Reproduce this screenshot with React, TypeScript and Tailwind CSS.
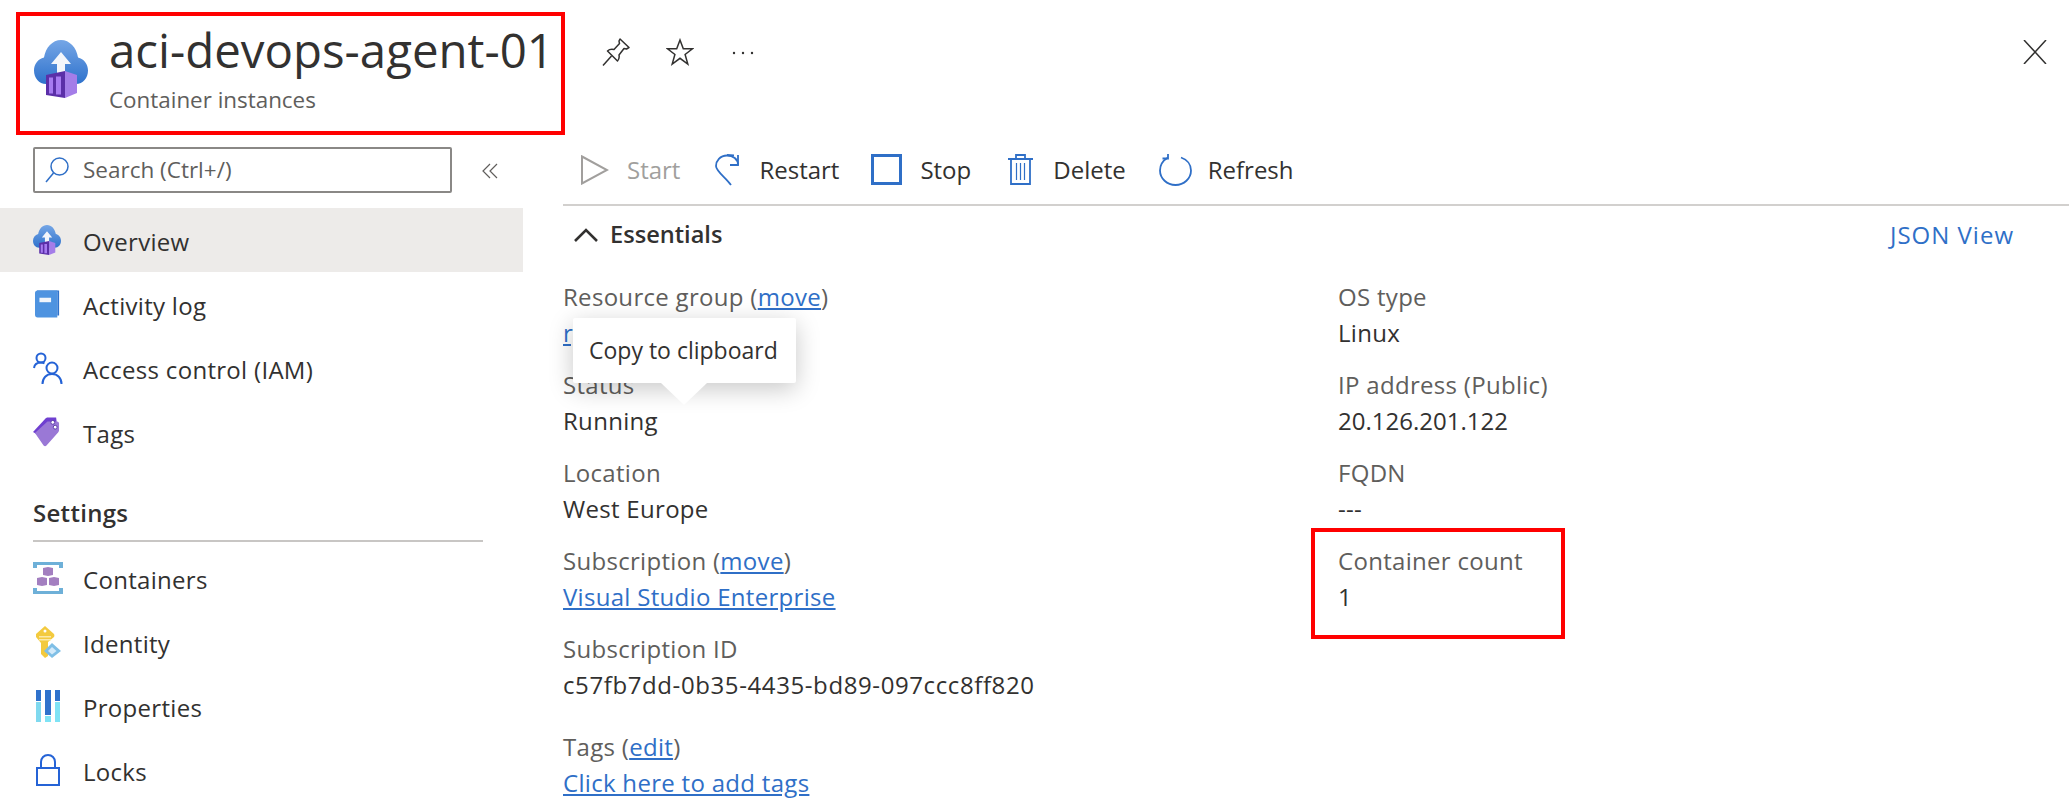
import type { ReactNode } from 'react';

const BLUE = '#2f6fc7';

function ContainerInstanceIcon({ className }: { className: string }) {
  return (
    <svg viewBox="0 0 54 58" className={className}>
      <defs>
        <linearGradient id="cloud" x1="0" y1="0" x2="0" y2="1">
          <stop offset="0" stopColor="#75a6e6" />
          <stop offset="1" stopColor="#2f72cc" />
        </linearGradient>
      </defs>
      <path
        d="M12 44C5 44 0 38 0 30.500C0 24 4 19 10 17.500C11.500 7.500 18.500 0 27 0C35.500 0 42.500 7.500 44 17.500C50 19 54 24 54 30.500C54 38 49 44 42 44Z"
        fill="url(#cloud)"
      />
      <path d="M27 12L37 24H31V36H23V24H17Z" fill="#f3f6fb" />
      <path d="M12 35L31 31V58L12 55Z" fill="#5b2fa8" />
      <path d="M15 37.500H19V53.500H15ZM22 36.500H27V54.500H22Z" fill="#a67af0" />
      <path d="M31 31L43 35V53L31 58Z" fill="#a47de8" />
    </svg>
  );
}

function PinIcon() {
  return (
    <svg viewBox="0 0 28 28" className="h-[28px] w-[28px]" fill="none" stroke="#323130" strokeWidth="1.500">
      <path d="M18 1L27 9.500L24.500 11L22 10.500L17 17C17.500 19.500 17 21.500 15.500 23L5.500 13C7 11.500 9.500 11 12 11.500L17.500 5.500L17 3Z" strokeLinejoin="round" />
      <path d="M9.500 18L1 27.500" />
    </svg>
  );
}

function StarIcon() {
  return (
    <svg viewBox="0 0 28 28" className="h-[28px] w-[28px]" fill="none" stroke="#323130" strokeWidth="1.500">
      <path d="M14 2L17.300 10.800H26.500L19.100 16.500L21.800 26L14 20.300L6.200 26L8.900 16.500L1.500 10.800H10.700Z" strokeLinejoin="miter" />
    </svg>
  );
}

function ToolButton({ icon, label, muted, gapClass }: { icon: ReactNode; label: string; muted?: boolean; gapClass: string }) {
  return (
    <div className={`flex items-center ${gapClass} ${muted ? 'text-[#a19f9d]' : 'text-[#323130]'}`}>
      {icon}
      <span>{label}</span>
    </div>
  );
}

function NavItem({ icon, label, active }: { icon: ReactNode; label: string; active?: boolean }) {
  return (
    <div className={`flex h-[64px] items-center text-[#323130] ${active ? 'bg-[#edebe9]' : ''}`}>
      <div className="flex w-[83px] shrink-0 justify-start pl-[33px]">{icon}</div>
      <span className="pt-[3px]">{label}</span>
    </div>
  );
}

function Field({ label, children, className = '' }: { label: ReactNode; children: ReactNode; className?: string }) {
  return (
    <div className={`mb-[16px] ${className}`}>
      <div className="flex h-[36px] items-center text-[#605e5c]">
        <span>{label}</span>
      </div>
      <div className="flex h-[36px] items-center text-[#323130]">{children}</div>
    </div>
  );
}

function Link({ children }: { children: ReactNode }) {
  return <span className="text-[#2f6fc7] underline underline-offset-2">{children}</span>;
}

const navTop = [
  { label: 'Overview', active: true, icon: <ContainerInstanceIcon className="h-[32px] w-[28px]" /> },
  {
    label: 'Activity log',
    icon: (
      <svg viewBox="0 0 28 30" className="ml-[2px] h-[30px] w-[25px]">
        <path d="M2 0H27V28H25V1H3Z" fill="#2f72cc" />
        <path d="M0 3C0 1 1 0 3 0H25V30H3C1 30 0 29 0 27Z" fill="#4e93e0" />
        <rect x="5" y="8" width="13" height="5" fill="#f1f5fb" />
      </svg>
    ),
  },
  {
    label: 'Access control (IAM)',
    icon: (
      <svg viewBox="0 0 30 32" className="h-[32px] w-[30px]" fill="none" stroke="#2563d6" strokeWidth="2">
        <circle cx="8" cy="6" r="4.500" />
        <circle cx="19" cy="16" r="5.500" />
        <path d="M1 16C1.500 12.500 4 10.500 8 10.500C9.500 10.500 10.500 10.800 11.500 11.300" />
        <path d="M9.500 32C9.500 26 13.500 22 19 22C24.500 22 28.500 26 28.500 32" />
      </svg>
    ),
  },
  {
    label: 'Tags',
    icon: (
      <svg viewBox="0 0 28 30" className="h-[30px] w-[27px]">
        <path d="M0 15L13 1C14 0 15 0 16 0L24 0L25 9L12 22Z" fill="#6f3fd0" />
        <path d="M2 16L15 4L25 4C26 4 27 5 27 6V13C27 14 26.500 15 26 15.500L14 29C13 30 12 30 11 29Z" fill="#9a78d6" />
        <circle cx="20.500" cy="5" r="2" fill="#fff" stroke="#5b3aa8" />
        <circle cx="23" cy="10" r="2" fill="#fff" stroke="#5b3aa8" />
      </svg>
    ),
  },
];

const navSettings = [
  {
    label: 'Containers',
    icon: (
      <svg viewBox="0 0 30 32" className="h-[32px] w-[30px]">
        <path d="M0 0H30V6H26V3H4V6H0ZM0 32V26H4V29H26V26H30V32Z" fill="#6eb0d8" />
        <path d="M10 6L15 5V14L10 13ZM15 5L20 6V13L15 14ZM4 16L9 15V24L4 23ZM9 15L14 16V23L9 24ZM16 16L21 15V24L16 23ZM21 15L26 16V23L21 24Z" fill="#a37fc0" />
      </svg>
    ),
  },
  {
    label: 'Identity',
    icon: (
      <svg viewBox="0 0 26 32" className="ml-[3px] h-[32px] w-[26px]">
        <path d="M9 0L18 8C18.500 9 18.500 10 18 11L12 16V30L9 32L5 28V17L0 11C-0.500 10 -0.500 9 0 8Z" fill="#f3ca3e" />
        <rect x="3" y="10" width="12" height="1.500" fill="#fbe9a8" />
        <rect x="3" y="13" width="12" height="1.500" fill="#fbe9a8" />
        <circle cx="9" cy="5" r="1.500" fill="#fff" />
        <path d="M16 17L25 25L16 32L8 25Z" fill="#7fbfe6" />
        <path d="M16 21L20.500 25L16 28.500L12 25Z" fill="#d3eafa" />
      </svg>
    ),
  },
  {
    label: 'Properties',
    icon: (
      <svg viewBox="0 0 24 32" className="ml-[3px] h-[32px] w-[24px]">
        <rect x="0" y="0" width="5" height="11" fill="#2f72cc" />
        <rect x="0" y="12" width="5" height="20" fill="#7fd9ef" />
        <rect x="9" y="0" width="6" height="25" fill="#2f72cc" />
        <rect x="9" y="26" width="6" height="6" fill="#7fe3f5" />
        <rect x="19" y="0" width="5" height="11" fill="#2f72cc" />
        <rect x="19" y="12" width="5" height="20" fill="#7fe3f5" />
      </svg>
    ),
  },
  {
    label: 'Locks',
    icon: (
      <svg viewBox="0 0 24 32" className="ml-[3px] h-[32px] w-[24px]" fill="none" stroke="#2563d6" strokeWidth="2">
        <rect x="1" y="14" width="22" height="17" />
        <path d="M5 14V8C5 4 8 1 12 1C16 1 19 4 19 8V14" />
      </svg>
    ),
  },
];

export default function App() {
  return (
    <div className="relative flex h-[806px] w-[2069px] flex-col overflow-hidden bg-white font-['Open_Sans',sans-serif] text-[24px] tracking-[0.3px]">
      {/* header */}
      <header className="flex h-[140px] shrink-0 items-start tracking-normal">
        <div className="ml-[34px] mt-[40px] w-[75px] shrink-0">
          <ContainerInstanceIcon className="h-[58px] w-[54px]" />
        </div>
        <div className="mt-[16px] w-[493px] shrink-0">
          <h1 className="text-[47.400px] leading-[68px] font-medium text-[#323130]">aci-devops-agent-01</h1>
          <div className="mt-[2px] text-[22.400px] leading-[28px] text-[#605e5c]">Container instances</div>
        </div>
        <div className="mt-[38px] flex items-center gap-[36px]">
          <PinIcon />
          <StarIcon />
          <svg viewBox="0 0 22 4" className="ml-[2px] mt-[2px] h-[4px] w-[22px]" fill="#323130">
            <circle cx="2" cy="2" r="1.200" />
            <circle cx="11" cy="2" r="1.200" />
            <circle cx="20" cy="2" r="1.200" />
          </svg>
        </div>
        <svg viewBox="0 0 24 24" className="ml-auto mr-[22px] mt-[40px] h-[24px] w-[24px]" stroke="#323130" strokeWidth="1.500">
          <path d="M1 0L23 24M23 0L1 24" />
        </svg>
      </header>

      <div className="flex min-h-0 flex-1">
        {/* sidebar */}
        <aside className="w-[523px] shrink-0">
          <div className="flex h-[68px] items-start pl-[33px] pt-[7px]">
            <div className="flex h-[46px] w-[419px] items-center rounded-[2px] border-2 border-[#8a8886] pl-[10px] text-[22.500px] tracking-normal text-[#605e5c]">
              <svg viewBox="0 0 24 26" className="mr-[14px] h-[26px] w-[24px]" fill="none" stroke={BLUE} strokeWidth="1.500">
                <circle cx="14.500" cy="9.500" r="8.500" />
                <path d="M8.500 16L1 25" />
              </svg>
              Search (Ctrl+/)
            </div>
            <svg viewBox="0 0 16 16" className="ml-[30px] mt-[16px] h-[16px] w-[16px]" fill="none" stroke="#605e5c" strokeWidth="1.200">
              <path d="M8 1L1 8L8 15M15 1L8 8L15 15" />
            </svg>
          </div>
          {navTop.map((item) => (
            <NavItem key={item.label} {...item} />
          ))}
          <div className="ml-[33px] mr-[40px] mt-[32px] flex h-[46px] items-start border-b-2 border-[#c8c6c4] font-semibold leading-[34px] text-[#323130]">
            Settings
          </div>
          <div className="mt-[4px]">
            {navSettings.map((item) => (
              <NavItem key={item.label} {...item} />
            ))}
          </div>
        </aside>

        {/* main */}
        <main className="ml-[40px] min-w-0 flex-1">
          <div className="flex h-[66px] items-center border-b-2 border-[#d2d0ce] pb-[5px] pl-[18px] tracking-normal">
            <ToolButton
              muted
              label="Start"
              gapClass="gap-[18px]"
              icon={
                <svg viewBox="0 0 28 30" className="h-[30px] w-[28px]" fill="none" stroke="#a19f9d" strokeWidth="2">
                  <path d="M1 1.500L26 15L1 28.500Z" />
                </svg>
              }
            />
            <div className="w-[35px]" />
            <ToolButton
              label="Restart"
              gapClass="gap-[20px]"
              icon={
                <svg viewBox="0 0 24 32" className="h-[32px] w-[24px]" fill="none" stroke={BLUE} strokeWidth="1.800">
                  <path d="M23 11C23 5 18 1.500 12 1.500C5 1.500 1 7 1 12C1 17 10 23 16 31" />
                  <path d="M12 1L19 1.500M23 1V11H15" />
                </svg>
              }
            />
            <div className="w-[32px]" />
            <ToolButton
              label="Stop"
              gapClass="gap-[18px]"
              icon={<div className="h-[31px] w-[31px] border-[3px] border-[#2f6fc7]" />}
            />
            <div className="w-[37px]" />
            <ToolButton
              label="Delete"
              gapClass="gap-[20px]"
              icon={
                <svg viewBox="0 0 25 31" className="h-[31px] w-[25px]" fill="none" stroke={BLUE} strokeWidth="1.800">
                  <path d="M0 5H25M8 5V1H17V5M3 5V30H22V5" />
                  <path d="M8.500 9V26M12.500 9V26M16.500 9V26" strokeWidth="1.200" />
                </svg>
              }
            />
            <div className="w-[33px]" />
            <ToolButton
              label="Refresh"
              gapClass="gap-[16px]"
              icon={
                <svg viewBox="0 0 33 32" className="h-[32px] w-[33px]" fill="none" stroke={BLUE} strokeWidth="1.800">
                  <path d="M22 3.500C28 5.500 32 10.500 32 16.500C32 24.500 25 31 16.500 31C8 31 1 24.500 1 16.500C1 11 4 6.500 9 3.500" />
                  <path d="M9 0V4.500H3.500" />
                </svg>
              }
            />
          </div>

          <div className="flex h-[72px] items-center pb-[14px] pl-[11px] pr-[55px]">
            <svg viewBox="0 0 24 14" className="mr-[12px] h-[14px] w-[24px]" fill="none" stroke="#323130" strokeWidth="2.600">
              <path d="M1 13L12 2L23 13" />
            </svg>
            <span className="text-[23.600px] font-semibold tracking-normal text-[#323130]">Essentials</span>
            <span className="ml-auto tracking-[1px] text-[#2f6fc7]">JSON View</span>
          </div>

          <div className="mt-[1px] flex">
            <div className="w-[775px] shrink-0">
              <Field label={<>Resource group (<Link>move</Link>)</>}>
                <Link>rg-devops-agents</Link>
              </Field>
              <Field label="Status">Running</Field>
              <Field label="Location">West Europe</Field>
              <Field label={<>Subscription (<Link>move</Link>)</>}>
                <Link>Visual Studio Enterprise</Link>
              </Field>
              <Field label="Subscription ID">
                <span className="tracking-[0.6px]">c57fb7dd-0b35-4435-bd89-097ccc8ff820</span>
              </Field>
              <Field label={<>Tags (<Link>edit</Link>)</>} className="mt-[26px]">
                <Link>Click here to add tags</Link>
              </Field>
            </div>
            <div>
              <Field label="OS type">Linux</Field>
              <Field label="IP address (Public)">
                <span className="tracking-normal">20.126.201.122</span>
              </Field>
              <Field label="FQDN">---</Field>
              <Field label="Container count">1</Field>
            </div>
          </div>
        </main>
      </div>

      {/* tooltip */}
      <div className="absolute left-[573px] top-[318px] flex h-[65px] w-[223px] items-center rounded-[2px] bg-white pl-[16px] text-[23px] tracking-normal text-[#323130] shadow-[0_6px_24px_rgba(0,0,0,0.22)]">
        Copy to clipboard
      </div>
      <div className="absolute left-[661px] top-[383px] h-[22px] w-[46px] bg-white drop-shadow-[0_8px_8px_rgba(0,0,0,0.28)] [clip-path:polygon(0_0,100%_0,50%_100%)]" />

      {/* red callouts */}
      <div className="absolute left-[16px] top-[12px] h-[123px] w-[549px] border-4 border-[#ff0000]" />
      <div className="absolute left-[1311px] top-[528px] h-[111px] w-[254px] border-4 border-[#ff0000]" />
    </div>
  );
}
